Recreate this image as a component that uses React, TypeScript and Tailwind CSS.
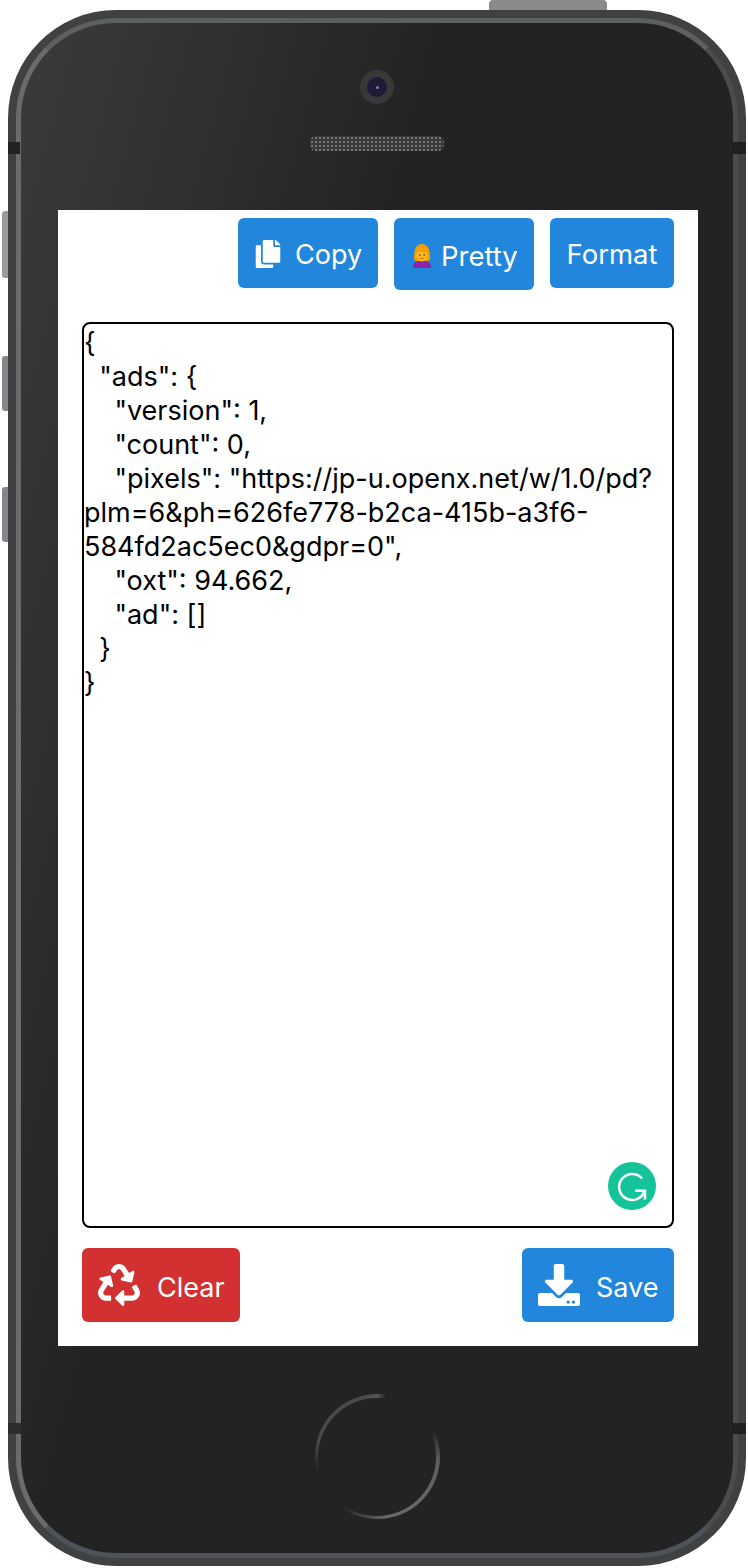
import { FaCopy, FaRecycle, FaDownload } from "react-icons/fa";

const fontStack = { fontFamily: "Inter, 'Noto Sans', sans-serif" };

const jsonText = `{
  "ads": {
    "version": 1,
    "count": 0,
    "pixels": "https://jp-u.openx.net/w/1.0/pd?plm=6&ph=626fe778-b2ca-415b-a3f6-584fd2ac5ec0&gdpr=0",
    "oxt": 94.662,
    "ad": []
  }
}`;

function PersonEmoji() {
  return (
    <svg width="20" height="25" viewBox="0 0 20 25" className="shrink-0 mt-[2px]">
      <path d="M1 25c0-5 3-7 6-7.500h6c3 .5 6 2.500 6 7.500z" fill="#8e24aa" />
      <path d="M2 16C2 5 5 1 10 1s8 4 8 15c-1 2-3 2.500-4 2H6c-1 .5-3 0-4-2z" fill="#f59f00" />
      <ellipse cx="10" cy="12" rx="5.500" ry="6.500" fill="#fbb81f" />
      <path d="M4 10c2-4 8-5 12-1-3 0-7-1-9-1-1 1-2 2-3 2z" fill="#ee8f00" />
      <circle cx="7.800" cy="12" r=".8" fill="#4a2a0a" />
      <circle cx="12.200" cy="12" r=".8" fill="#4a2a0a" />
      <path d="M8.500 15.500h3" stroke="#a85a10" strokeWidth=".8" />
    </svg>
  );
}

function GrammarlyBadge() {
  return (
    <svg width="48" height="48" viewBox="0 0 48 48">
      <circle cx="24" cy="24" r="24" fill="#15c39a" />
      <path d="M34 16.500A13 13 0 1 0 36.500 29" fill="none" stroke="#fff" strokeWidth="2.500" />
      <path d="M27 28.700h10v8.800" fill="none" stroke="#fff" strokeWidth="2.500" />
    </svg>
  );
}

export default function App() {
  return (
    <div className="relative w-[748px] h-[1568px] bg-white overflow-hidden pt-[10px] pl-[8px]" style={fontStack}>
      {/* hardware buttons */}
      <div className="absolute left-[489px] top-0 w-[118px] h-[11px] bg-[#8a8a8a] rounded-t-[4px]" />
      <div className="absolute left-[2px] top-[211px] w-[6px] h-[67px] bg-[#9a9a9a] rounded-l-[3px]" />
      <div className="absolute left-[2px] top-[356px] w-[6px] h-[55px] bg-[#85858c] rounded-l-[3px]" />
      <div className="absolute left-[2px] top-[487px] w-[6px] h-[55px] bg-[#85858c] rounded-l-[3px]" />

      {/* phone body */}
      <div className="relative w-[738px] h-[1556px] rounded-[108px] bg-[#3f4142] p-[8px]">
        <div className="absolute left-0 top-[132px] w-[12px] h-[12px] bg-[#232323]" />
        <div className="absolute right-0 top-[132px] w-[14px] h-[12px] bg-[#1f2021]" />
        <div className="absolute left-0 top-[1413px] w-[13px] h-[11px] bg-[#2c2d2d]" />
        <div className="absolute right-0 top-[1413px] w-[14px] h-[11px] bg-[#1f2021]" />

        <div className="w-[722px] h-[1540px] rounded-[100px] border-[5px] border-t-[#5c6060] border-l-[#6b6b6b] border-r-[#4a4c4f] border-b-[#4d5359] bg-[linear-gradient(105deg,#3b3b3b_0%,#303030_18%,#232323_38%)] flex flex-col items-center">
          {/* camera */}
          <div className="mt-[47px] w-[34px] h-[34px] rounded-full bg-[#383838] flex items-center justify-center">
            <div className="w-[20px] h-[20px] rounded-full bg-[#1d1b38] flex items-center justify-center">
              <div className="w-[3px] h-[3px] rounded-full bg-[#8a88a8]" />
            </div>
          </div>
          {/* speaker */}
          <div className="mt-[32px] w-[134px] h-[15px] rounded-[6px] bg-[#3a3a3a] bg-[radial-gradient(#757575_1.2px,transparent_1.2px)] bg-[size:4px_4px]" />

          {/* screen */}
          <div className="ml-[2px] mt-[59px] w-[640px] h-[1136px] bg-white flex flex-col px-[24px] pt-[8px]">
            <div className="flex justify-end items-start gap-[16px]">
              <button className="w-[140px] h-[70px] bg-[#2287dc] rounded-[6px] text-white text-[27px] flex items-center pl-[16px]">
                <FaCopy size={28} className="mt-[2px]" />
                <span className="ml-[13px] mt-[4px]">Copy</span>
              </button>
              <button className="w-[140px] h-[72px] bg-[#2287dc] rounded-[6px] text-white text-[27.5px] flex items-center pl-[18px]">
                <PersonEmoji />
                <span className="ml-[9px] mt-[6px]">Pretty</span>
              </button>
              <button className="w-[124px] h-[70px] bg-[#2287dc] rounded-[6px] text-white text-[27.5px] flex items-center justify-center pt-[4px]">
                Format
              </button>
            </div>

            <div className="mt-[32px] relative w-[592px] h-[906px] border-2 border-black rounded-[8px] text-[27px] leading-[34px] text-black whitespace-pre-wrap break-words pt-[2px]">
              {jsonText}
              <div className="absolute right-[16px] bottom-[16px] h-[48px]">
                <GrammarlyBadge />
              </div>
            </div>

            <div className="mt-[20px] flex justify-between">
              <button className="w-[158px] h-[74px] bg-[#d33131] rounded-[6px] text-white text-[27px] flex items-center pl-[16px]">
                <FaRecycle size={42} />
                <span className="ml-[17px] mt-[6px]">Clear</span>
              </button>
              <button className="w-[152px] h-[74px] bg-[#2287dc] rounded-[6px] text-white text-[27px] flex items-center pl-[16px]">
                <FaDownload size={42} />
                <span className="ml-[16px] mt-[6px]">Save</span>
              </button>
            </div>
          </div>

          {/* home button */}
          <div className="mt-[48px] w-[125px] h-[125px] rounded-full bg-[conic-gradient(#555_0deg,#232323_8deg,#232323_65deg,#5f5f5f_95deg,#6a6a6a_170deg,#232323_215deg,#232323_255deg,#4a4a4a_285deg,#4a4a4a_345deg,#555_360deg)] flex items-center justify-center">
            <div className="w-[118px] h-[118px] rounded-full bg-[#232323]" />
          </div>
        </div>
      </div>
    </div>
  );
}
